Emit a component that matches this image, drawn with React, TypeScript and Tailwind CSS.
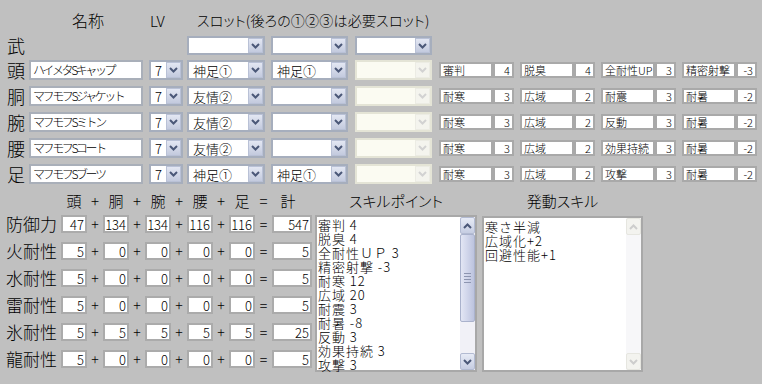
import React from "react";

type Skill = [string, number];

const equip: { part: string; name: string; s1: string; s2: string; skills: Skill[] }[] = [
  { part: "頭", name: "ハイメタSキャップ", s1: "神足①", s2: "神足①", skills: [["審判", 4], ["脱臭", 4], ["全耐性UP", 3], ["精密射撃", -3]] },
  { part: "胴", name: "マフモフSジャケット", s1: "友情②", s2: "", skills: [["耐寒", 3], ["広域", 2], ["耐震", 3], ["耐暑", -2]] },
  { part: "腕", name: "マフモフSミトン", s1: "友情②", s2: "", skills: [["耐寒", 3], ["広域", 2], ["反動", 3], ["耐暑", -2]] },
  { part: "腰", name: "マフモフSコート", s1: "友情②", s2: "", skills: [["耐寒", 3], ["広域", 2], ["効果持続", 3], ["耐暑", -2]] },
  { part: "足", name: "マフモフSブーツ", s1: "神足①", s2: "神足①", skills: [["耐寒", 3], ["広域", 2], ["攻撃", 3], ["耐暑", -2]] },
];

const stats: [string, number[], number][] = [
  ["防御力", [47, 134, 134, 116, 116], 547],
  ["火耐性", [5, 0, 0, 0, 0], 5],
  ["水耐性", [5, 0, 0, 0, 0], 5],
  ["雷耐性", [5, 0, 0, 0, 0], 5],
  ["氷耐性", [5, 5, 5, 5, 5], 25],
  ["龍耐性", [5, 0, 0, 0, 0], 5],
];

const points = [
  "審判 4",
  "脱臭 4",
  "全耐性ＵＰ 3",
  "精密射撃 -3",
  "耐寒 12",
  "広域 20",
  "耐震 3",
  "耐暑 -8",
  "反動 3",
  "効果持続 3",
  "攻撃 3",
];

const active = ["寒さ半減", "広域化+2", "回避性能+1"];

function Chevron({ up, color }: { up?: boolean; color: string }) {
  return (
    <svg width="9" height="6" viewBox="0 0 9 6">
      <path d={up ? "M1 5 L4.5 1.5 L8 5" : "M1 1 L4.5 4.5 L8 1"} fill="none" stroke={color} strokeWidth="2" />
    </svg>
  );
}

function Select({ value, w, disabled }: { value?: string; w: string; disabled?: boolean }) {
  return (
    <div className={`${w} flex h-full border-2 ${disabled ? "border-[#e4e4d6] bg-[#fbfbf2]" : "border-[#a6aebd] bg-white"}`}>
      <div className="flex flex-1 items-center overflow-hidden whitespace-nowrap pl-[4px] text-[13px] leading-none">{value}</div>
      <div
        className={`flex w-[15px] items-center justify-center border ${
          disabled ? "border-[#ecece4] bg-[#f4f4ee]" : "border-[#b9c1d6] bg-gradient-to-b from-[#e3e7f3] to-[#c3cade]"
        }`}
      >
        <Chevron color={disabled ? "#d2d2d2" : "#4b5878"} />
      </div>
    </div>
  );
}

function ScrollBtn({ up, disabled }: { up?: boolean; disabled?: boolean }) {
  return (
    <div
      className={`flex h-[17px] shrink-0 items-center justify-center rounded-[2px] border ${
        disabled ? "border-[#e6e6e0] bg-[#f3f3ef]" : "border-[#b3bbd2] bg-gradient-to-b from-[#e7ebf6] to-[#c6cde2]"
      }`}
    >
      <Chevron up={up} color={disabled ? "#cdcdcd" : "#4b5878"} />
    </div>
  );
}

function SkillPair({ name, value }: { name: string; value: number }) {
  return (
    <div className="flex h-[16px] w-[75px]">
      <div className="flex w-[54px] items-center overflow-hidden whitespace-nowrap border-2 border-[#a9a9a9] bg-white pl-[2px] text-[11px] leading-none">
        {name}
      </div>
      <div className="flex w-[21px] items-center justify-end border-2 border-[#a9a9a9] bg-white pr-[2px] text-[11px] leading-none">
        {value}
      </div>
    </div>
  );
}

function StatBox({ w, children }: { w: string; children: React.ReactNode }) {
  return (
    <div className={`${w} flex items-center justify-end border-2 border-[#ababab] bg-white pr-[1px] text-[13px] leading-none`}>
      {children}
    </div>
  );
}

export default function App() {
  return (
    <div className="h-[384px] w-[762px] overflow-hidden bg-[#c0c0c0] font-['Noto_Sans_CJK_JP','DejaVu_Sans',sans-serif] font-light text-black">
      {/* column titles */}
      <div className="flex h-[36px] items-center pt-[4px] text-[14px] leading-none [font-feature-settings:'palt']">
        <div className="w-[72px]" />
        <div className="w-[78px] text-[16px]">名称</div>
        <div className="w-[47px] text-[15px]">LV</div>
        <div className="whitespace-nowrap tracking-[0.2px]">スロット(後ろの①②③は必要スロット)</div>
      </div>

      {/* weapon row */}
      <div className="flex h-[19px]">
        <div className="w-[29px] pl-[7px] text-[18px] leading-[19px]">武</div>
        <div className="w-[158px]" />
        <Select w="w-[78px]" />
        <div className="w-[6px]" />
        <Select w="w-[77px]" />
        <div className="w-[7px]" />
        <Select w="w-[77px]" />
      </div>

      {/* armor rows */}
      <div className="mt-[5px] flex flex-col gap-[6px]">
        {equip.map((e) => (
          <div key={e.part} className="flex h-[20px] items-center">
            <div className="w-[29px] pl-[7px] text-[18px] leading-[20px]">{e.part}</div>
            <div className="flex h-full w-[114px] items-center overflow-hidden whitespace-nowrap border-2 border-[#a9afb9] bg-white pl-[2px] text-[12px] leading-none tracking-[-2.4px]">
              {e.name}
            </div>
            <div className="ml-[6px] h-full">
              <Select w="w-[34px]" value="7" />
            </div>
            <div className="ml-[4px] h-full">
              <Select w="w-[78px]" value={e.s1} />
            </div>
            <div className="ml-[6px] h-full">
              <Select w="w-[77px]" value={e.s2} />
            </div>
            <div className="ml-[7px] h-full">
              <Select w="w-[77px]" disabled />
            </div>
            <div className="ml-[7px] flex gap-[6px]">
              {e.skills.map(([n, v]) => (
                <SkillPair key={n} name={n} value={v} />
              ))}
            </div>
          </div>
        ))}
      </div>

      {/* totals + skills */}
      <div className="mt-[5px] flex">
        <div className="w-[312px] pl-[6px]">
          <div className="flex h-[26px] items-center pb-[4px] text-[15px] leading-none">
            <div className="w-[55px]" />
            {["頭", "胴", "腕", "腰", "足"].map((p, i) => (
              <React.Fragment key={p}>
                <div className="w-[26px] text-center">{p}</div>
                <div className={`${i < 4 ? "w-[16px]" : "w-[17px]"} text-center`}>{i < 4 ? "+" : "="}</div>
              </React.Fragment>
            ))}
            <div className="w-[40px] pr-[8px] text-center">計</div>
          </div>
          <div className="flex flex-col gap-[9px]">
            {stats.map(([label, vals, total]) => (
              <div key={label} className="flex h-[18px]">
                <div className="w-[55px] whitespace-nowrap text-[17px] leading-[18px]">{label}</div>
                {vals.map((v, i) => (
                  <React.Fragment key={i}>
                    <StatBox w="w-[26px]">{v}</StatBox>
                    <div className={`${i < 4 ? "w-[16px]" : "w-[17px]"} text-center text-[14px] leading-[18px]`}>{i < 4 ? "+" : "="}</div>
                  </React.Fragment>
                ))}
                <StatBox w="w-[40px]">{total}</StatBox>
              </div>
            ))}
          </div>
        </div>

        <div className="ml-[3px] w-[162px]">
          <div className="flex h-[26px] items-center justify-center pb-[4px] text-[15px] leading-none [font-feature-settings:'palt']">
            スキルポイント
          </div>
          <div className="flex h-[157px] border-2 border-[#a8a8a8] bg-white">
            <div className="flex-1 pl-px text-[13px] tracking-[1px]">
              {points.map((l) => (
                <div key={l} className="flex h-[14px] items-center whitespace-pre leading-none">
                  {l}
                </div>
              ))}
            </div>
            <div className="flex w-[15px] flex-col bg-[#f1f1f7]">
              <ScrollBtn up />
              <div className="flex h-[88px] shrink-0 flex-col items-center justify-center gap-[2px] rounded-[2px] border border-[#aab2cc] bg-gradient-to-r from-[#e3e6f4] via-[#d0d5ea] to-[#bcc3de]">
                {[0, 1, 2, 3].map((i) => (
                  <div key={i} className="h-px w-[7px] bg-[#8d95b0]" />
                ))}
              </div>
              <div className="flex-1" />
              <ScrollBtn />
            </div>
          </div>
        </div>

        <div className="ml-[5px] w-[161px]">
          <div className="flex h-[26px] items-center justify-center pb-[4px] text-[15px] leading-none [font-feature-settings:'palt']">
            発動スキル
          </div>
          <div className="mt-px flex h-[156px] border-2 border-[#a8a8a8] bg-white">
            <div className="flex-1 pl-px pt-px text-[13px] tracking-[1px]">
              {active.map((l) => (
                <div key={l} className="flex h-[14px] items-center whitespace-pre leading-none">
                  {l}
                </div>
              ))}
            </div>
            <div className="flex w-[15px] flex-col bg-[#f7f7f9]">
              <ScrollBtn up disabled />
              <div className="flex-1" />
              <ScrollBtn disabled />
            </div>
          </div>
        </div>
      </div>
    </div>
  );
}
